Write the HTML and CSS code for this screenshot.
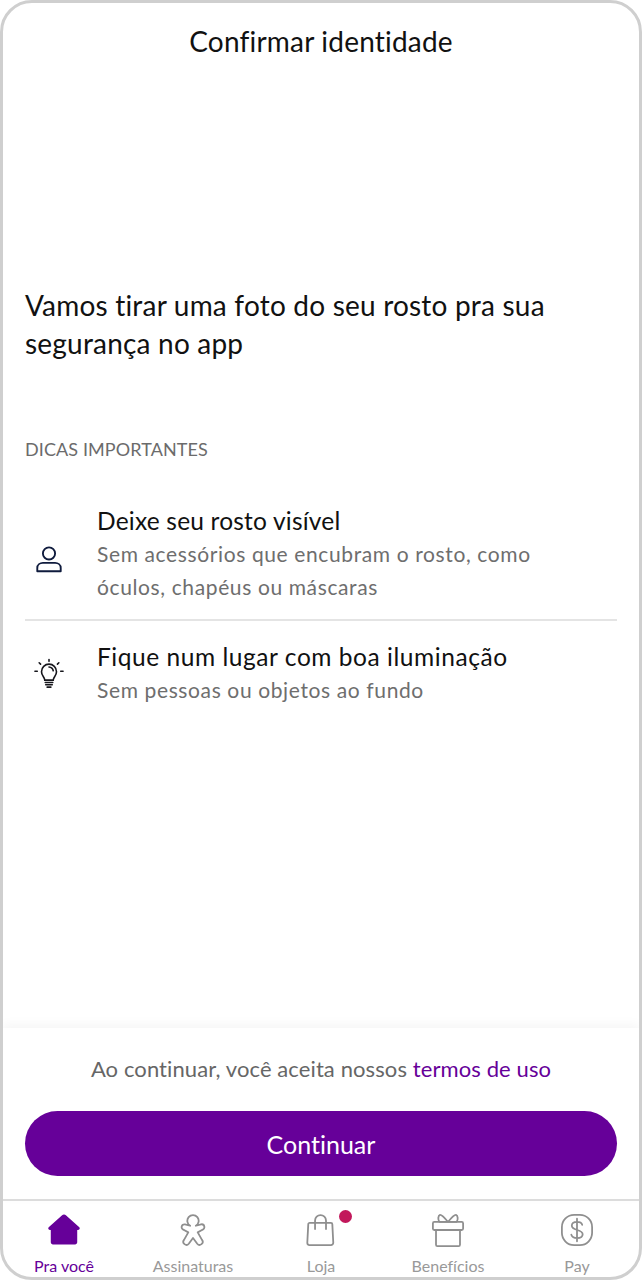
FILE: index.html
```html
<!DOCTYPE html>
<html lang="pt-BR">
<head>
<meta charset="utf-8">
<title>Confirmar identidade</title>
<link rel="stylesheet" href="styles.css">
</head>
<body>
<div class="phone">
  <header class="top"><h1>Confirmar identidade</h1></header>
  <main class="content">
    <h2 class="lead">Vamos tirar uma foto do seu rosto pra sua segurança no app</h2>
    <p class="section">DICAS IMPORTANTES</p>
    <ul class="tips">
      <li class="tip tip-first">
        <svg class="tip-icon icon-person" viewBox="0 0 32 32" fill="none" stroke="#0f1b3d" stroke-width="2"><circle cx="16" cy="9" r="6.500"/><path d="M3.500 28v-3.500c0-3.500 3-5.500 6-5.500h13c3 0 6 2 6 5.500V28z" stroke-linejoin="round"/></svg>
        <div class="tip-text">
          <h3>Deixe seu rosto visível</h3>
          <p>Sem acessórios que encubram o rosto, como óculos, chapéus ou máscaras</p>
        </div>
      </li>
      <li class="tip tip-second">
        <svg class="tip-icon" viewBox="0 0 32 32" fill="none" stroke="#16161c" stroke-width="1.700" stroke-linecap="round"><path d="M11.500 22.500c0-3-3.500-4.500-3.500-9a8 8 0 0 1 16 0c0 4.500-3.500 6-3.500 9z"/><path d="M16 8.500a5 5 0 0 1 4.500 4"/><path d="M12 25h8M12.500 27.500h7M14 30h4"/><path d="M16 0.500v2M5.500 4l1.500 1.500M26.500 4L25 5.500M1 13h2.500M28.500 13H31"/></svg>
        <div class="tip-text">
          <h3>Fique num lugar com boa iluminação</h3>
          <p>Sem pessoas ou objetos ao fundo</p>
        </div>
      </li>
    </ul>
  </main>
  <section class="footer">
    <p class="terms">Ao continuar, você aceita nossos <a href="#">termos de uso</a></p>
    <button class="cta" type="button">Continuar</button>
  </section>
  <nav class="tabs">
    <a class="tab active" href="#">
      <svg viewBox="0 0 36 36"><path d="M18 1.500c.8 0 1.500.3 2 .8l14.200 12.900c1 1 .4 2.800-1.200 2.800H32v13c0 1.300-1 2.300-2.300 2.300H6.300C5 33.300 4 32.300 4 31v-13H3c-1.600 0-2.200-1.800-1.200-2.800L16 2.300c.5-.5 1.200-.8 2-.8z" fill="#660099"/></svg>
      <span>Pra você</span>
    </a>
    <a class="tab" href="#">
      <svg viewBox="0 0 36 36" fill="none" stroke="#8f8f8f" stroke-width="1.900" stroke-linejoin="round"><path d="M15 13.500A6 6 0 1 1 21 13.500L26.500 12A3 3 0 0 1 27.500 18L23 20.500L27.500 28.500A3 3 0 0 1 22.500 32.500L18 26.500L13.500 32.500A3 3 0 0 1 8.500 28.500L13 20.500L8.500 18A3 3 0 0 1 9.500 12Z"/></svg>
      <span>Assinaturas</span>
    </a>
    <a class="tab" href="#">
      <span class="tab-icon">
        <svg viewBox="0 0 36 36" fill="none" stroke="#8f8f8f" stroke-width="1.900" stroke-linejoin="round" stroke-linecap="round"><path d="M6.500 10.500h22a1.500 1.500 0 0 1 1.500 1.500l1 19.500a2.500 2.500 0 0 1-2.500 2.500h-23A2.500 2.500 0 0 1 3.500 31.500L4.500 12A1.500 1.500 0 0 1 6.500 10.500z"/><path d="M11.700 17V8a5.800 5.800 0 0 1 11.600 0V17"/></svg>
        <i class="dot"></i>
      </span>
      <span>Loja</span>
    </a>
    <a class="tab" href="#">
      <svg viewBox="0 0 36 36" fill="none" stroke="#8f8f8f" stroke-width="1.900" stroke-linejoin="round"><rect x="2" y="9.500" width="32" height="8.500" rx="1.500"/><path d="M5.300 18V33.500a1.500 1.500 0 0 0 1.500 1.500h22.400a1.500 1.500 0 0 0 1.500-1.500V18"/><path d="M18 9.500C14 4.500 11.500 1.500 9.500 2S7 7.500 9 9.500zM18 9.500c4-5 6.500-8 8.500-7.500S29 7.500 27 9.500z"/></svg>
      <span>Benefícios</span>
    </a>
    <a class="tab" href="#">
      <span class="tab-icon">
        <svg viewBox="0 0 36 36" fill="none" stroke="#8f8f8f" stroke-width="1.900"><rect x="2" y="2" width="32" height="32" rx="13"/><path d="M23.500 12.500c-.6-2-2.600-3-5.500-3-3.300 0-5.500 1.500-5.500 4 0 5.500 11.500 3.500 11.500 9 0 2.500-2.500 4-6 4-3 0-5.200-1.200-6-3.500M18 6v24" stroke-linecap="round"/></svg>
      </span>
      <span>Pay</span>
    </a>
  </nav>
</div>
</body>
</html>
```
FILE: styles.css
```css
* { box-sizing: border-box; }
html, body { margin: 0; padding: 0; background: #fff; }
body { font-family: "Lato", "Noto Sans", sans-serif; font-variant-ligatures: none; }
.phone {
  width: 642px;
  height: 1280px;
  border: 3px solid #cfcfcf;
  border-radius: 32px;
  display: flex;
  flex-direction: column;
  overflow: hidden;
  background: #fff;
}
.top { height: 77px; flex: none; display: flex; justify-content: center; padding-top: 20px; }
.top h1 { margin: 0; font-size: 28px; line-height: 36px; font-weight: 400; color: #111; letter-spacing: 0.2px; }
.content { flex: 1; padding: 206px 22px 0; }
.lead { margin: 0; font-size: 28px; line-height: 38px; font-weight: 400; color: #111; width: 540px; letter-spacing: 0.2px; }
.section { margin: 0; padding-top: 75px; font-size: 18px; line-height: 24px; color: #6b6b6b; letter-spacing: 0.1px; }
.tips { list-style: none; margin: 0; padding: 0; }
.tip { display: flex; align-items: center; gap: 33px; padding-left: 9px; }
.tip-first { height: 160px; padding-top: 28px; border-bottom: 2px solid #e4e4e4; }
.tip-second { padding-top: 20px; }
.tip-icon { width: 30px; height: 32px; flex: none; }
.icon-person { margin-top: 12px; }
.tip-text h3 { margin: 0; font-size: 24.500px; line-height: 32px; font-weight: 400; color: #111; letter-spacing: 0.2px; }
.tip-second .tip-text h3 { letter-spacing: 0.55px; }
.tip-text p { margin: 0; font-size: 21px; line-height: 33px; color: #6e6e6e; width: 470px; letter-spacing: 0.62px; }
.tip-second .tip-text p { line-height: 34px; }
.footer {
  height: 173px;
  flex: none;
  box-shadow: 0 -4px 10px rgba(0, 0, 0, 0.04);
  padding: 23px 22px 0;
  display: flex;
  flex-direction: column;
  border-bottom: 2px solid #dcdcdc;
  position: relative;
}
.terms { margin: 0; text-align: center; font-size: 22px; line-height: 36px; color: #666; letter-spacing: 0.1px; }
.terms a { color: #660099; text-decoration: none; }
.cta {
  margin-top: 24px;
  height: 65px;
  border: 0;
  border-radius: 33px;
  background: #660099;
  color: #fff;
  font: inherit;
  font-size: 25px;
}
.tabs { height: 76px; flex: none; display: grid; grid-template-columns: 122px 136px 120px 134px 124px; }
.tab {
  display: flex;
  flex-direction: column;
  align-items: center;
  padding-top: 12px;
  text-decoration: none;
  color: #999;
  font-size: 16px;
  line-height: 20px;
}
.tab svg { width: 34px; height: 34px; display: block; }
.tab > span:last-child { margin-top: 9px; }
.tab.active { color: #660099; }
.tab-icon { position: relative; display: block; width: 34px; height: 34px; }
.dot {
  position: absolute;
  left: 35px;
  top: -3px;
  width: 13px;
  height: 13px;
  border-radius: 50%;
  background: #c2185b;
}
```
